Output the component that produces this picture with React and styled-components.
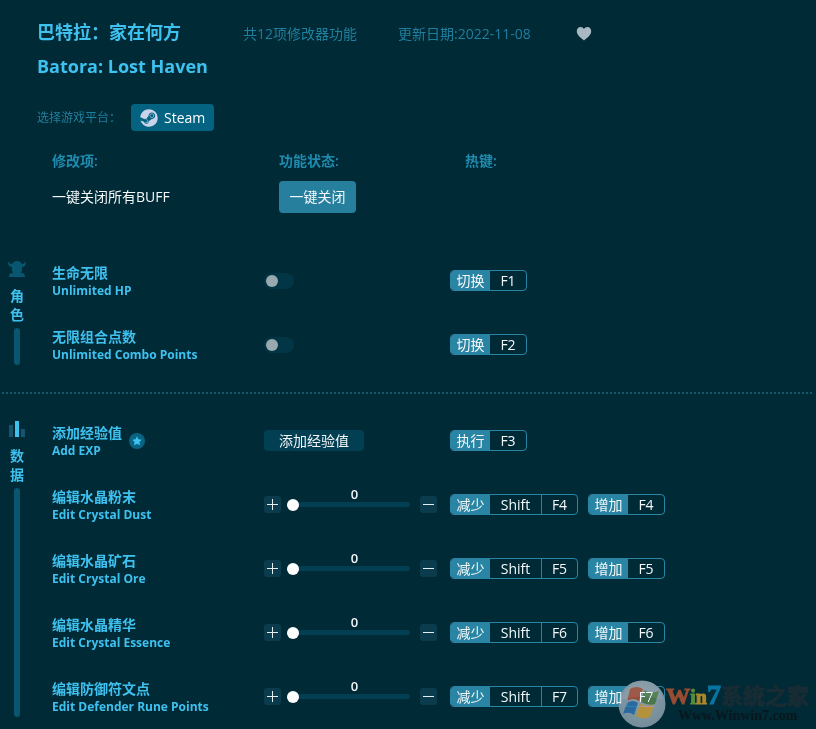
import React, { useState } from "react";
import styled, { createGlobalStyle } from "styled-components";
import { FaSteam } from "react-icons/fa";

const GlobalStyle = createGlobalStyle`
  * { box-sizing: border-box; }
  body {
    margin: 0;
    background: #002a35;
    color: #f4f8fa;
    font: 14px/20px "Open Sans", "Noto Sans CJK SC", sans-serif;
  }
  button, input, h1, h2, p { font: inherit; margin: 0; }
  button { color: inherit; border: 0; padding: 0; cursor: pointer; }
`;

const Page = styled.main`
  position: relative;
  min-height: 100vh;
`;

const Header = styled.header`
  padding: 20px 37px 0;
`;

const TitleRow = styled.div`
  display: flex;
  align-items: flex-start;
`;

const Titles = styled.div`
  width: 206px;
  color: #3fc1f0;
`;

const Title = styled.h1`
  && { font-size: 18px; font-weight: 700; line-height: 24px; }
`;

const Subtitle = styled.h2`
  && { font-size: 18px; font-weight: 700; line-height: 24px; margin-top: 10px; white-space: nowrap; }
`;

const Meta = styled.p`
  && { min-width: ${(p) => p.$width}; margin: 4px 40px 0 0; color: #1f7f9e; }
`;

const HeartButton = styled.button`
  display: flex;
  margin-top: 6px;
  background: none;
`;

const PlatformRow = styled.div`
  display: flex;
  align-items: center;
  gap: 10px;
  margin-top: 26px;
  font-size: 12px;
  color: #1f7f9e;
`;

const PlatformLabel = styled.span`
  width: 84px;
`;

const PlatformButton = styled.button`
  && { font-size: 14px; }
  display: flex;
  align-items: center;
  gap: 6px;
  height: 27px;
  padding: 0 9px;
  border-radius: 4px;
  background: #056382;
  color: #fff;
  svg { color: #c9d3ec; }
`;

const Grid = styled.div`
  display: grid;
  grid-template-columns: 212px 186px 1fr;
  align-items: center;
`;

const Intro = styled(Grid)`
  grid-template-columns: 227px 186px 1fr;
  padding: 20px 0 36px 52px;
  row-gap: 10px;
`;

const ColumnLabel = styled.span`
  color: #1f8bae;
  font-weight: 600;
`;

const CloseButton = styled.button`
  justify-self: start;
  min-width: 77px;
  height: 32px;
  padding: 0 10px;
  border-radius: 4px;
  background: #267f9c;
`;

const Section = styled.section`
  display: flex;
`;

const Side = styled.div`
  display: flex;
  flex-direction: column;
  align-items: center;
  width: 34px;
  padding: 12px 0;
  color: #3fc1f0;
`;

const SideLabel = styled.span`
  width: 14px;
  margin: 8px 0 4px;
  line-height: 19px;
  font-weight: 600;
  text-align: center;
`;

const SideBar = styled.span`
  flex: 1;
  width: 6px;
  border-radius: 3px;
  background: #08566f;
`;

const Rows = styled.div`
  flex: 1;
  padding-left: 18px;
`;

const Row = styled(Grid)`
  height: 64px;
  padding-bottom: 1px;
`;

const NameCell = styled.div`
  display: flex;
  align-items: center;
  gap: 7px;
`;

const Name = styled.div`
  padding-top: 2px;
  color: #3fc1f0;
  font-weight: 600;
  line-height: 17px;
  white-space: nowrap;
`;

const EnglishName = styled.div`
  font-size: 12px;
  font-weight: 700;
  line-height: 19px;
`;

const Divider = styled.hr`
  margin: 15px 4px 15px 2px;
  border: 0;
  border-top: 2px dotted #14566b;
`;

const Switch = styled.input`
  appearance: none;
  width: 30px;
  height: 16px;
  margin: 0;
  padding: 2px;
  border-radius: 8px;
  background: #023646;
  cursor: pointer;
  &::before {
    content: "";
    display: block;
    width: 12px;
    height: 12px;
    border-radius: 50%;
    background: #9aa9af;
  }
  &:checked { background: #267f9c; }
  &:checked::before { margin-left: auto; }
`;

const ActionButton = styled.button`
  justify-self: start;
  width: 100px;
  height: 21px;
  border-radius: 4px;
  background: #033f53;
`;

const Stepper = styled.div`
  display: flex;
  align-items: center;
  gap: 6px;
`;

const StepButton = styled.button`
  display: grid;
  place-items: center;
  width: 17px;
  height: 17px;
  border-radius: 3px;
  background: #0a3c4e;
`;

const SliderBox = styled.label`
  position: relative;
  display: flex;
  width: 123px;
  margin-right: 4px;
`;

const SliderValue = styled.output`
  position: absolute;
  bottom: 9px;
  left: 0;
  width: 100%;
  padding-left: 12px;
  text-align: center;
  font-size: 13px;
  font-weight: 600;
  line-height: 16px;
`;

const Slider = styled.input`
  appearance: none;
  width: 100%;
  height: 12px;
  background: none;
  cursor: pointer;
  &::-webkit-slider-runnable-track {
    height: 5px;
    border-radius: 3px;
    background: #033f53;
  }
  &::-webkit-slider-thumb {
    appearance: none;
    width: 12px;
    height: 12px;
    margin-top: -3px;
    border-radius: 50%;
    background: #fff;
  }
`;

const Hotkeys = styled.div`
  display: flex;
  gap: 10px;
`;

const Hotkey = styled.button`
  display: flex;
  height: 21px;
  border: 1px solid #2a84a3;
  border-radius: 4px;
  overflow: hidden;
  background: none;
  line-height: 19px;
`;

const KeyAction = styled.span`
  width: 39px;
  background: #2a84a3;
  text-align: center;
`;

const Key = styled.kbd`
  font: inherit;
  width: ${(p) => (p.$wide ? "51px" : "36px")};
  text-align: center;
  & + & { border-left: 1px solid #2a84a3; }
`;

const Watermark = styled.div`
  position: absolute;
  right: 7px;
  bottom: 1px;
  display: flex;
  pointer-events: none;
`;

const Orb = styled.svg`
  mix-blend-mode: lighten;
`;

const WatermarkText = styled.div`
  display: flex;
  flex-direction: column;
  align-items: center;
`;

const Brand = styled.div`
  display: flex;
  align-items: baseline;
  height: 28px;
  font: 700 28px/28px "Liberation Serif", serif;
`;

const BrandPart = styled.span`
  color: ${(p) => p.$color};
  font-size: ${(p) => p.$size};
  font-family: ${(p) => (p.$cjk ? '"Noto Sans CJK SC", sans-serif' : "inherit")};
  -webkit-text-stroke: 1px ${(p) => p.$color};
`;

const Site = styled.div`
  color: #07171d;
  font: 700 14px/16px "Liberation Serif", serif;
`;

function HeartIcon() {
  return (
    <svg width="16" height="16" viewBox="0 0 16 16" aria-hidden="true">
      <path fill="#a9b8c2" d="M8 14.500C5 12 .8 9.300.8 5.200.8 2.800 2.400 1 4.500 1 6 1 7.300 1.800 8 3c.7-1.200 2-2 3.500-2 2.100 0 3.700 1.800 3.700 4.200C15.200 9.300 11 12 8 14.500z" />
    </svg>
  );
}

function CharacterIcon() {
  return (
    <svg width="18" height="17" viewBox="0 0 18 17" aria-hidden="true">
      <path fill="#08566f" d="M1 0c0 2 1 3 3 3 1-2 3-3 5-3s4 1 5 3c2 0 3-1 3-3 2 3 0 6-3 6v3c0 1-1 2-1 3 2 0 4 0 4 4H1c0-4 2-4 4-4 0-1-1-2-1-3V6C1 6-1 3 1 0z" />
    </svg>
  );
}

function DataIcon() {
  return (
    <svg width="16" height="17" viewBox="0 0 16 17" aria-hidden="true">
      <path fill="#14566f" d="M0 4h4v12H0zM12 8h4v8h-4z" />
      <path fill="#3fc1f0" d="M6 0h4v16H6z" />
    </svg>
  );
}

function StarIcon() {
  return (
    <svg width="16" height="16" viewBox="0 0 16 16" aria-hidden="true">
      <circle cx="8" cy="8" r="8" fill="#086482" />
      <path fill="#3fc1f0" d="m8 3.300 1.500 3 3.300.4-2.400 2.300.6 3.300L8 10.800l-3 1.500.6-3.300-2.400-2.300 3.300-.4z" />
    </svg>
  );
}

function StepIcon({ plus }) {
  return (
    <svg width="11" height="11" viewBox="0 0 11 11" aria-hidden="true">
      <path stroke="#e4edf0" d={plus ? "M0 5.500h11M5.500 0v11" : "M0 5.500h11"} />
    </svg>
  );
}

function WindowsOrb() {
  return (
    <Orb width="48" height="48" viewBox="0 0 48 48" aria-hidden="true">
      <defs>
        <radialGradient id="orb" cx="50%" cy="40%" r="60%">
          <stop offset="0" stopColor="#8b9ea9" />
          <stop offset="1" stopColor="#748d9a" />
        </radialGradient>
      </defs>
      <circle cx="24" cy="24" r="23.500" fill="url(#orb)" />
      <g opacity=".9">
        <path fill="#98452f" d="M12 9q6-4 13 0l-4 12q-6-4-12 0z" />
        <path fill="#447440" d="M26 10q7 4 15 1l-4 13q-7 2-14-2z" />
        <path fill="#2265a0" d="M9 23q6-4 11 0l-4 12q-5-4-11-1z" />
        <path fill="#b99230" d="M22 24q7 3 14 1l-4 12q-7 3-14-1z" />
      </g>
      <path fill="#fff" opacity=".08" d="M3 20Q6 2 24 1t21 19Q24 13 3 20z" />
    </Orb>
  );
}

function NumberControl({ label }) {
  const [value, setValue] = useState(0);
  return (
    <Stepper>
      <StepButton aria-label={`${label} +`} onClick={() => setValue(Math.min(100, value + 1))}>
        <StepIcon plus />
      </StepButton>
      <SliderBox>
        <SliderValue>{value}</SliderValue>
        <Slider
          type="range"
          min="0"
          max="100"
          aria-label={label}
          value={value}
          onChange={(e) => setValue(Number(e.target.value))}
        />
      </SliderBox>
      <StepButton aria-label={`${label} -`} onClick={() => setValue(Math.max(0, value - 1))}>
        <StepIcon />
      </StepButton>
    </Stepper>
  );
}

const adjustKeys = (key) => [
  { action: "减少", keys: ["Shift", key] },
  { action: "增加", keys: [key] },
];

const sections = [
  {
    label: "角色",
    icon: <CharacterIcon />,
    rows: [
      { name: "生命无限", en: "Unlimited HP", type: "switch", hotkeys: [{ action: "切换", keys: ["F1"] }] },
      { name: "无限组合点数", en: "Unlimited Combo Points", type: "switch", hotkeys: [{ action: "切换", keys: ["F2"] }] },
    ],
  },
  {
    label: "数据",
    icon: <DataIcon />,
    rows: [
      { name: "添加经验值", en: "Add EXP", type: "action", starred: true, hotkeys: [{ action: "执行", keys: ["F3"] }] },
      { name: "编辑水晶粉末", en: "Edit Crystal Dust", type: "number", hotkeys: adjustKeys("F4") },
      { name: "编辑水晶矿石", en: "Edit Crystal Ore", type: "number", hotkeys: adjustKeys("F5") },
      { name: "编辑水晶精华", en: "Edit Crystal Essence", type: "number", hotkeys: adjustKeys("F6") },
      { name: "编辑防御符文点", en: "Edit Defender Rune Points", type: "number", hotkeys: adjustKeys("F7") },
    ],
  },
];

function FeatureRow({ row }) {
  return (
    <Row>
      <NameCell>
        <Name>
          {row.name}
          <EnglishName>{row.en}</EnglishName>
        </Name>
        {row.starred && <StarIcon />}
      </NameCell>
      {row.type === "switch" && <Switch type="checkbox" role="switch" aria-label={row.name} />}
      {row.type === "action" && <ActionButton>{row.name}</ActionButton>}
      {row.type === "number" && <NumberControl label={row.name} />}
      <Hotkeys>
        {row.hotkeys.map((h) => (
          <Hotkey key={h.action}>
            <KeyAction>{h.action}</KeyAction>
            {h.keys.map((k) => (
              <Key key={k} $wide={k.length > 2}>{k}</Key>
            ))}
          </Hotkey>
        ))}
      </Hotkeys>
    </Row>
  );
}

export default function App() {
  return (
    <Page>
      <GlobalStyle />
      <Header>
        <TitleRow>
          <Titles>
            <Title>巴特拉：家在何方</Title>
            <Subtitle>Batora: Lost Haven</Subtitle>
          </Titles>
          <Meta $width="115px">共12项修改器功能</Meta>
          <Meta $width="138px">更新日期:2022-11-08</Meta>
          <HeartButton aria-label="收藏"><HeartIcon /></HeartButton>
        </TitleRow>
        <PlatformRow>
          <PlatformLabel>选择游戏平台：</PlatformLabel>
          <PlatformButton><FaSteam size={18} />Steam</PlatformButton>
        </PlatformRow>
      </Header>
      <Intro>
        <ColumnLabel>修改项:</ColumnLabel>
        <ColumnLabel>功能状态:</ColumnLabel>
        <ColumnLabel>热键:</ColumnLabel>
        <span>一键关闭所有BUFF</span>
        <CloseButton>一键关闭</CloseButton>
      </Intro>
      {sections.map((section, i) => (
        <React.Fragment key={section.label}>
          {i > 0 && <Divider />}
          <Section>
            <Side>
              {section.icon}
              <SideLabel>{section.label}</SideLabel>
              <SideBar />
            </Side>
            <Rows>
              {section.rows.map((row) => <FeatureRow key={row.name} row={row} />)}
            </Rows>
          </Section>
        </React.Fragment>
      ))}
      <Watermark>
        <WindowsOrb />
        <WatermarkText>
          <Brand>
            <BrandPart $color="#994c2f" $size="24px">W</BrandPart>
            <BrandPart $color="#568c3c" $size="20px">i</BrandPart>
            <BrandPart $color="#a9882d" $size="20px">n</BrandPart>
            <BrandPart $color="#0875a3" $size="28px">7</BrandPart>
            <BrandPart $color="#182c35" $size="22px" $cjk>系统之家</BrandPart>
          </Brand>
          <Site>Www.Winwin7.com</Site>
        </WatermarkText>
      </Watermark>
    </Page>
  );
}
